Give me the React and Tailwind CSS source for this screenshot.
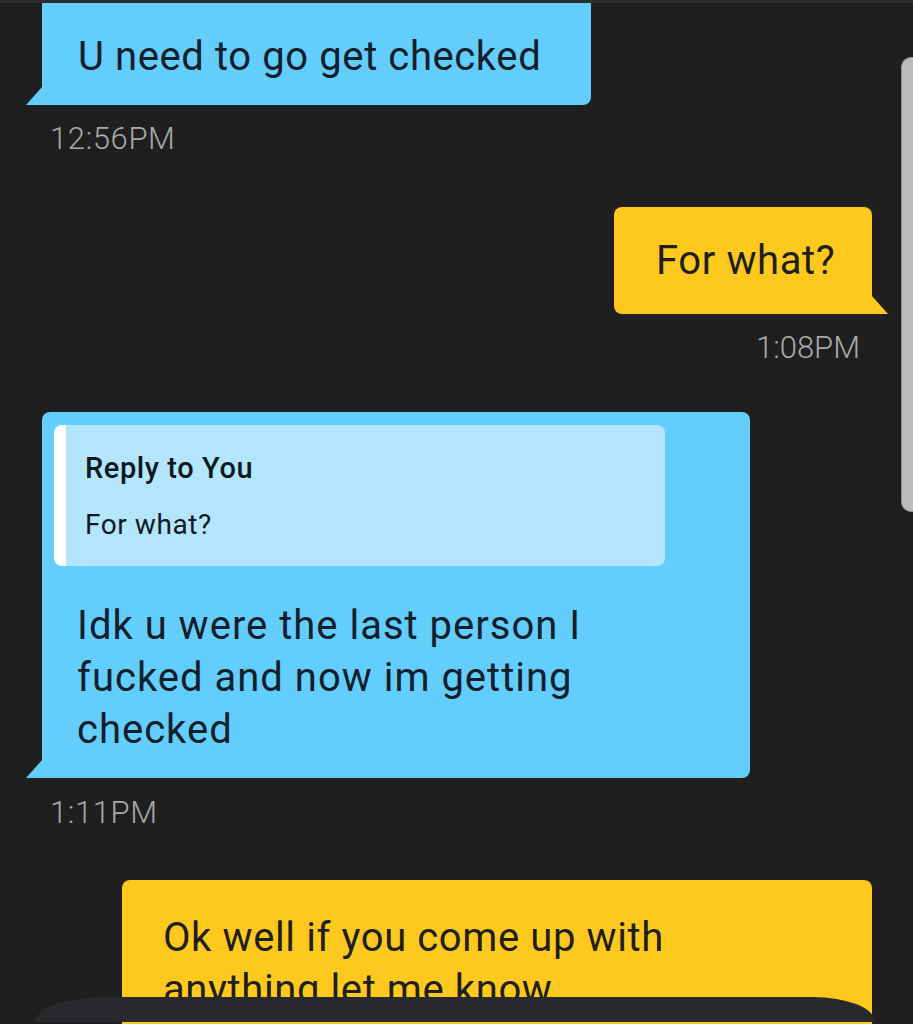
import React from 'react'

const font = { fontFamily: 'Roboto, "Liberation Sans", sans-serif' }

const LeftTail = ({ color }) => (
    <svg className="absolute -left-[16px] bottom-0" width="16" height="18" viewBox="0 0 16 18">
        <polygon points="16,0 16,18 0,18" fill={color} />
    </svg>
)

const RightTail = ({ color }) => (
    <svg className="absolute -right-[16px] bottom-0" width="16" height="18" viewBox="0 0 16 18">
        <polygon points="0,0 16,18 0,18" fill={color} />
    </svg>
)

const Stamp = ({ children, right }) => (
    <div className={`text-[31px] leading-[36px] font-light text-[#a9a9a9] ${right ? 'self-end mr-[53px] tracking-[0]' : 'ml-[50px] tracking-[0.02em]'}`}>
        {children}
    </div>
)

export default function App() {
    return (
        <div className="relative w-[913px] h-[1024px] overflow-hidden bg-[#1f1f1f]" style={font}>
            <div className="h-[3px] bg-[#2d2d2d]" />

            <div className="flex flex-col">
                {/* incoming */}
                <div className="relative ml-[42px] w-[549px] h-[102px] bg-[#63cdfc] rounded-br-[8px] flex items-center pl-[36px] pt-[6px]">
                    <span className="text-[40px] leading-[52px] text-[#13202b] tracking-[0.015em]">U need to go get checked</span>
                    <LeftTail color="#63cdfc" />
                </div>
                <div className="mt-[16px]">
                    <Stamp>12:56PM</Stamp>
                </div>

                {/* outgoing */}
                <div className="relative self-end mr-[41px] mt-[50px] w-[258px] h-[107px] bg-[#fdc91f] rounded-t-[8px] rounded-bl-[8px] flex items-center pl-[42px]">
                    <span className="text-[40px] leading-[52px] text-[#1f1f1f] tracking-[0.015em]">For what?</span>
                    <RightTail color="#fdc91f" />
                </div>
                <div className="mt-[16px] flex flex-col">
                    <Stamp right>1:08PM</Stamp>
                </div>

                {/* incoming with reply */}
                <div className="relative ml-[42px] mt-[46px] w-[708px] h-[366px] bg-[#63cdfc] rounded-t-[8px] rounded-br-[8px] pt-[13px] pl-[12px]">
                    <div className="flex w-[611px] h-[141px] rounded-[8px] overflow-hidden">
                        <div className="w-[12px] bg-white" />
                        <div className="flex-1 bg-[#b3e6fc] pl-[19px] pt-[26px] text-[#101820]">
                            <div className="text-[29px] leading-[34px] font-medium tracking-[0.02em]">Reply to You</div>
                            <div className="mt-[23px] text-[28px] leading-[34px] tracking-[0.02em]">For what?</div>
                        </div>
                    </div>
                    <div className="mt-[34px] pl-[23px] text-[40px] leading-[52px] text-[#13202b] tracking-[0.025em]">
                        Idk u were the last person I<br />
                        fucked and now im getting<br />
                        checked
                    </div>
                    <LeftTail color="#63cdfc" />
                </div>
                <div className="mt-[17px]">
                    <Stamp>1:11PM</Stamp>
                </div>

                {/* outgoing, cut off */}
                <div className="relative self-end mr-[41px] mt-[49px] w-[750px] h-[200px] bg-[#fdc91f] rounded-t-[8px] pt-[32px] pl-[41px]">
                    <div className="text-[40px] leading-[52px] text-[#1f1f1f] tracking-[0.015em]">
                        Ok well if you come up with<br />
                        anything let me know
                    </div>
                </div>
            </div>

            {/* side handle */}
            <div className="absolute right-0 top-[57px] w-[12px] h-[455px] bg-[#bcbcbc] border border-r-0 border-[#8e8e8e] rounded-l-[10px]" />

            {/* bottom sheet edge */}
            <div className="absolute left-[35px] top-[997px] w-[840px] h-[25px] bg-[#28292c] rounded-tl-[80px_28px] rounded-tr-[70px_28px]" />
        </div>
    )
}
